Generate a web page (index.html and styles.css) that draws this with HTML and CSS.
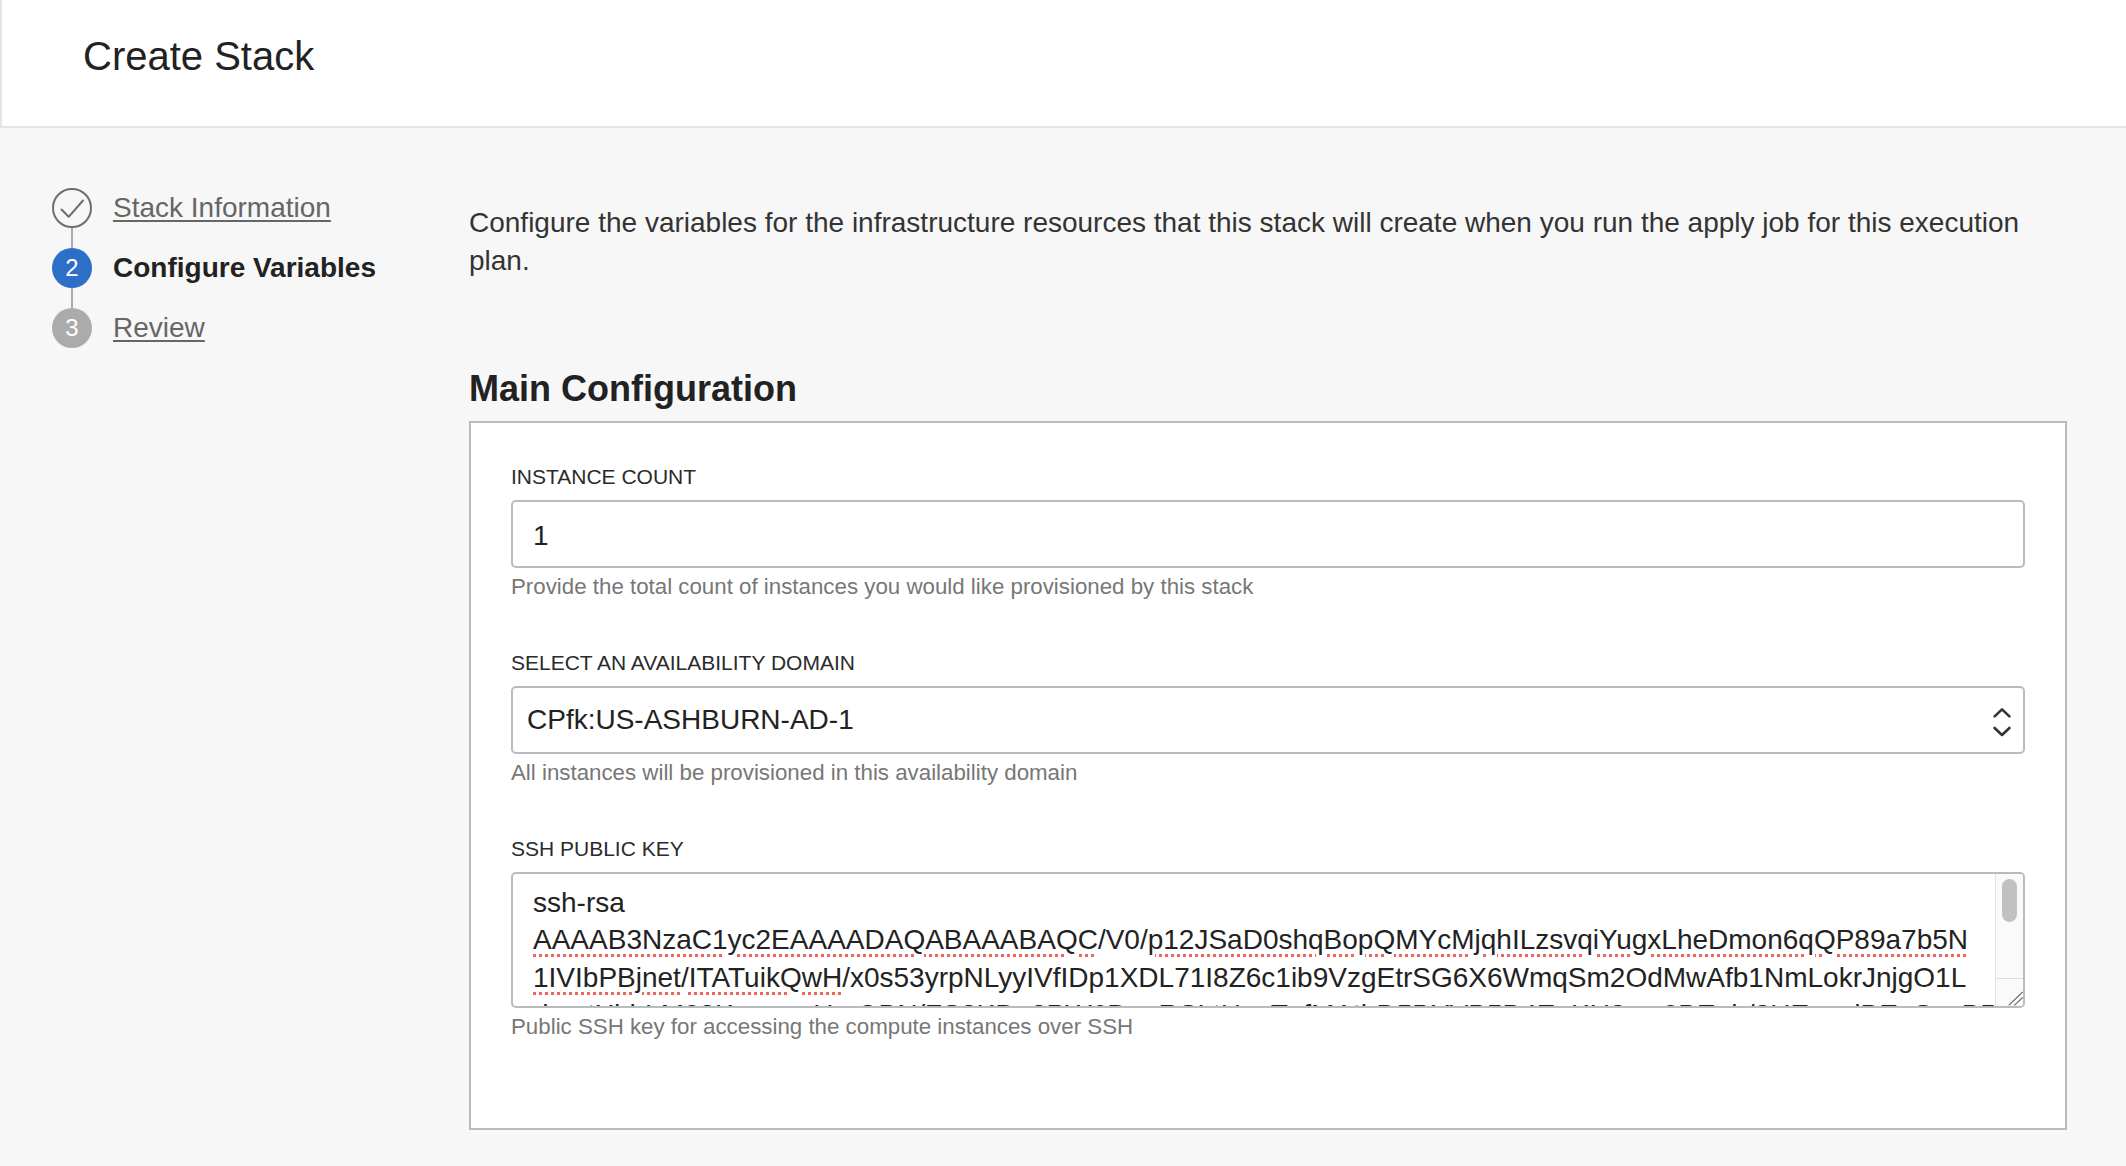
FILE: index.html
```html
<!DOCTYPE html>
<html lang="en">
<head>
<meta charset="utf-8">
<title>Create Stack</title>
<link rel="stylesheet" href="styles.css">
</head>
<body>
<header class="page-header">
  <h1 class="page-title">Create Stack</h1>
</header>
<div class="layout">
  <nav class="steps">
    <div class="step">
      <span class="step-icon step-icon-done">
        <svg width="40" height="40" viewBox="0 0 40 40"><circle cx="20" cy="20" r="19" fill="none" stroke="#6d6d6d" stroke-width="2"/><path d="M9.5 21.5 L16.7 28.8 L31 12.5" fill="none" stroke="#6d6d6d" stroke-width="2" stroke-linecap="round" stroke-linejoin="round"/></svg>
      </span>
      <a class="step-link" href="#">Stack Information</a>
    </div>
    <div class="step-connector"></div>
    <div class="step">
      <span class="step-icon step-icon-current">2</span>
      <span class="step-label-current">Configure Variables</span>
    </div>
    <div class="step-connector"></div>
    <div class="step">
      <span class="step-icon step-icon-todo">3</span>
      <a class="step-link" href="#">Review</a>
    </div>
  </nav>
  <main class="content">
    <p class="intro">Configure the variables for the infrastructure resources that this stack will create when you run the apply job for this execution plan.</p>
    <h2 class="section-title">Main Configuration</h2>
    <section class="panel">
      <div class="field">
        <div class="field-label">INSTANCE COUNT</div>
        <input class="text-input" type="text" value="1">
        <div class="field-help">Provide the total count of instances you would like provisioned by this stack</div>
      </div>
      <div class="field">
        <div class="field-label">SELECT AN AVAILABILITY DOMAIN</div>
        <div class="select-box">
          <span class="select-value">CPfk:US-ASHBURN-AD-1</span>
          <svg class="select-arrows" width="20" height="32" viewBox="0 0 20 32"><path d="M2.6 10.4 L10 3.4 L17.4 10.4" fill="none" stroke="#333" stroke-width="2.6" stroke-linecap="round" stroke-linejoin="round"/><path d="M2.6 22 L10 29 L17.4 22" fill="none" stroke="#333" stroke-width="2.6" stroke-linecap="round" stroke-linejoin="round"/></svg>
        </div>
        <div class="field-help">All instances will be provisioned in this availability domain</div>
      </div>
      <div class="field">
        <div class="field-label">SSH PUBLIC KEY</div>
        <div class="textarea-box">
          <div class="textarea-text">
            <div class="ta-line">ssh-rsa</div>
            <div class="ta-line"><span class="spell">AAAAB3NzaC1yc2EAAAADAQABAAABAQC</span>/V0/<span class="spell">p12JSaD0shqBopQMYcMjqhILzsvqiYugxLheDmon6qQP89a7b5N</span></div>
            <div class="ta-line"><span class="spell">1IVIbPBjnet</span>/<span class="spell">ITATuikQwH</span>/x0s53yrpNLyyIVfIDp1XDL71I8Z6c1ib9VzgEtrSG6X6WmqSm2OdMwAfb1NmLokrJnjgO1L</div>
            <div class="ta-line">dcrotXhhLM03KvnzwnHmQBN/ZS3KDg2PW6DauRSLtHceTqfMAtbD5BYVB5B4EoKU3ym0BEeb/8UEqwdBEoSzuB5l</div>
          </div>
          <div class="scrollbar">
            <div class="scroll-track"><div class="scroll-thumb"></div></div>
            <div class="resizer">
              <svg width="28" height="28" viewBox="0 0 28 28"><path d="M12.7 27.4 L26.7 14 M18.3 27.4 L26.7 19.4" stroke="#6a6a6a" stroke-width="1.2" fill="none"/></svg>
            </div>
          </div>
        </div>
        <div class="field-help">Public SSH key for accessing the compute instances over SSH</div>
      </div>
    </section>
  </main>
</div>
</body>
</html>
```
FILE: styles.css
```css
* { box-sizing: border-box; }

html, body {
  margin: 0;
  padding: 0;
}

body {
  background: #f7f7f7;
  font-family: "Liberation Sans", Arial, Helvetica, sans-serif;
  color: #222;
  min-height: 1166px;
}

.page-header {
  height: 128px;
  background: #fff;
  border-bottom: 2px solid #e5e5e5;
  border-left: 2px solid #e5e5e5;
  padding: 33px 0 0 81px;
}

.page-title {
  margin: 0;
  font-size: 40px;
  line-height: 46px;
  font-weight: 400;
  color: #222;
}

.layout {
  display: flex;
  padding-top: 60px;
}

.steps {
  width: 469px;
  flex: none;
  padding-left: 52px;
  display: flex;
  flex-direction: column;
}

.step {
  display: flex;
  align-items: center;
  gap: 21px;
  height: 40px;
}

.step-icon {
  width: 40px;
  height: 40px;
  flex: none;
  border-radius: 50%;
  display: flex;
  align-items: center;
  justify-content: center;
  font-size: 24px;
  color: #fff;
}

.step-icon svg { display: block; }

.step-icon-current { background: #2d6ec8; }
.step-icon-todo { background: #ababab; }

.step-connector {
  width: 2px;
  height: 20px;
  margin-left: 19px;
  background: #ababab;
}

.step-link {
  font-size: 28px;
  line-height: 34px;
  color: #666;
  text-decoration: underline;
  text-decoration-thickness: 2px;
  text-underline-offset: 3px;
}

.step-label-current {
  font-size: 28px;
  line-height: 34px;
  font-weight: 700;
  color: #222;
}

.content {
  flex: 1;
  min-width: 0;
  padding: 16px 59px 0 0;
}

.intro {
  margin: 0;
  max-width: 1585px;
  font-size: 28px;
  line-height: 38px;
  color: #333;
}

.section-title {
  margin: 87px 0 11px;
  font-size: 36px;
  line-height: 43px;
  font-weight: 700;
  color: #222;
}

.panel {
  background: #fff;
  border: 2px solid #b8bcc0;
  padding: 42px 40px 89px;
  display: flex;
  flex-direction: column;
  gap: 52px;
}

.field {
  display: flex;
  flex-direction: column;
}

.field-label {
  font-size: 21px;
  line-height: 24px;
  color: #2b2b2b;
  margin-bottom: 11px;
}

.field-help {
  font-size: 22.3px;
  line-height: 24px;
  color: #777;
  margin-top: 7px;
}

.text-input {
  display: block;
  width: 100%;
  height: 68px;
  margin: 0;
  border: 2px solid #b8bcc0;
  border-radius: 5px;
  background: #fff;
  padding: 4px 20px 0;
  font-family: inherit;
  font-size: 28px;
  color: #222;
  outline: none;
}

.select-box {
  height: 68px;
  border: 2px solid #b8bcc0;
  border-radius: 5px;
  background: #fff;
  padding: 0 11px 0 14px;
  display: flex;
  align-items: center;
  justify-content: space-between;
}

.select-value {
  font-size: 28px;
  color: #222;
}

.select-arrows {
  display: block;
  margin-top: 4px;
}

.textarea-box {
  height: 136px;
  border: 2px solid #b8bcc0;
  border-radius: 5px;
  background: #fff;
  display: flex;
  overflow: hidden;
}

.textarea-text {
  flex: 1;
  min-width: 0;
  overflow: hidden;
  padding: 10px 0 0 20px;
  font-size: 28px;
  line-height: 37.4px;
  color: #222;
}

.ta-line {
  white-space: nowrap;
}

.spell {
  text-decoration: underline dotted #f0645c;
  text-decoration-thickness: 3px;
  text-underline-offset: 5px;
}

.scrollbar {
  width: 28px;
  flex: none;
  background: #fafafa;
  border-left: 1px solid #e3e3e3;
  display: flex;
  flex-direction: column;
}

.scroll-track {
  flex: 1;
  padding: 5px 0 0 6px;
}

.scroll-thumb {
  width: 15px;
  height: 43px;
  border-radius: 8px;
  background: #c1c1c1;
}

.resizer {
  height: 28px;
  flex: none;
  border-top: 1px solid #dedede;
}

.resizer svg { display: block; margin-top: -1px; }
```
